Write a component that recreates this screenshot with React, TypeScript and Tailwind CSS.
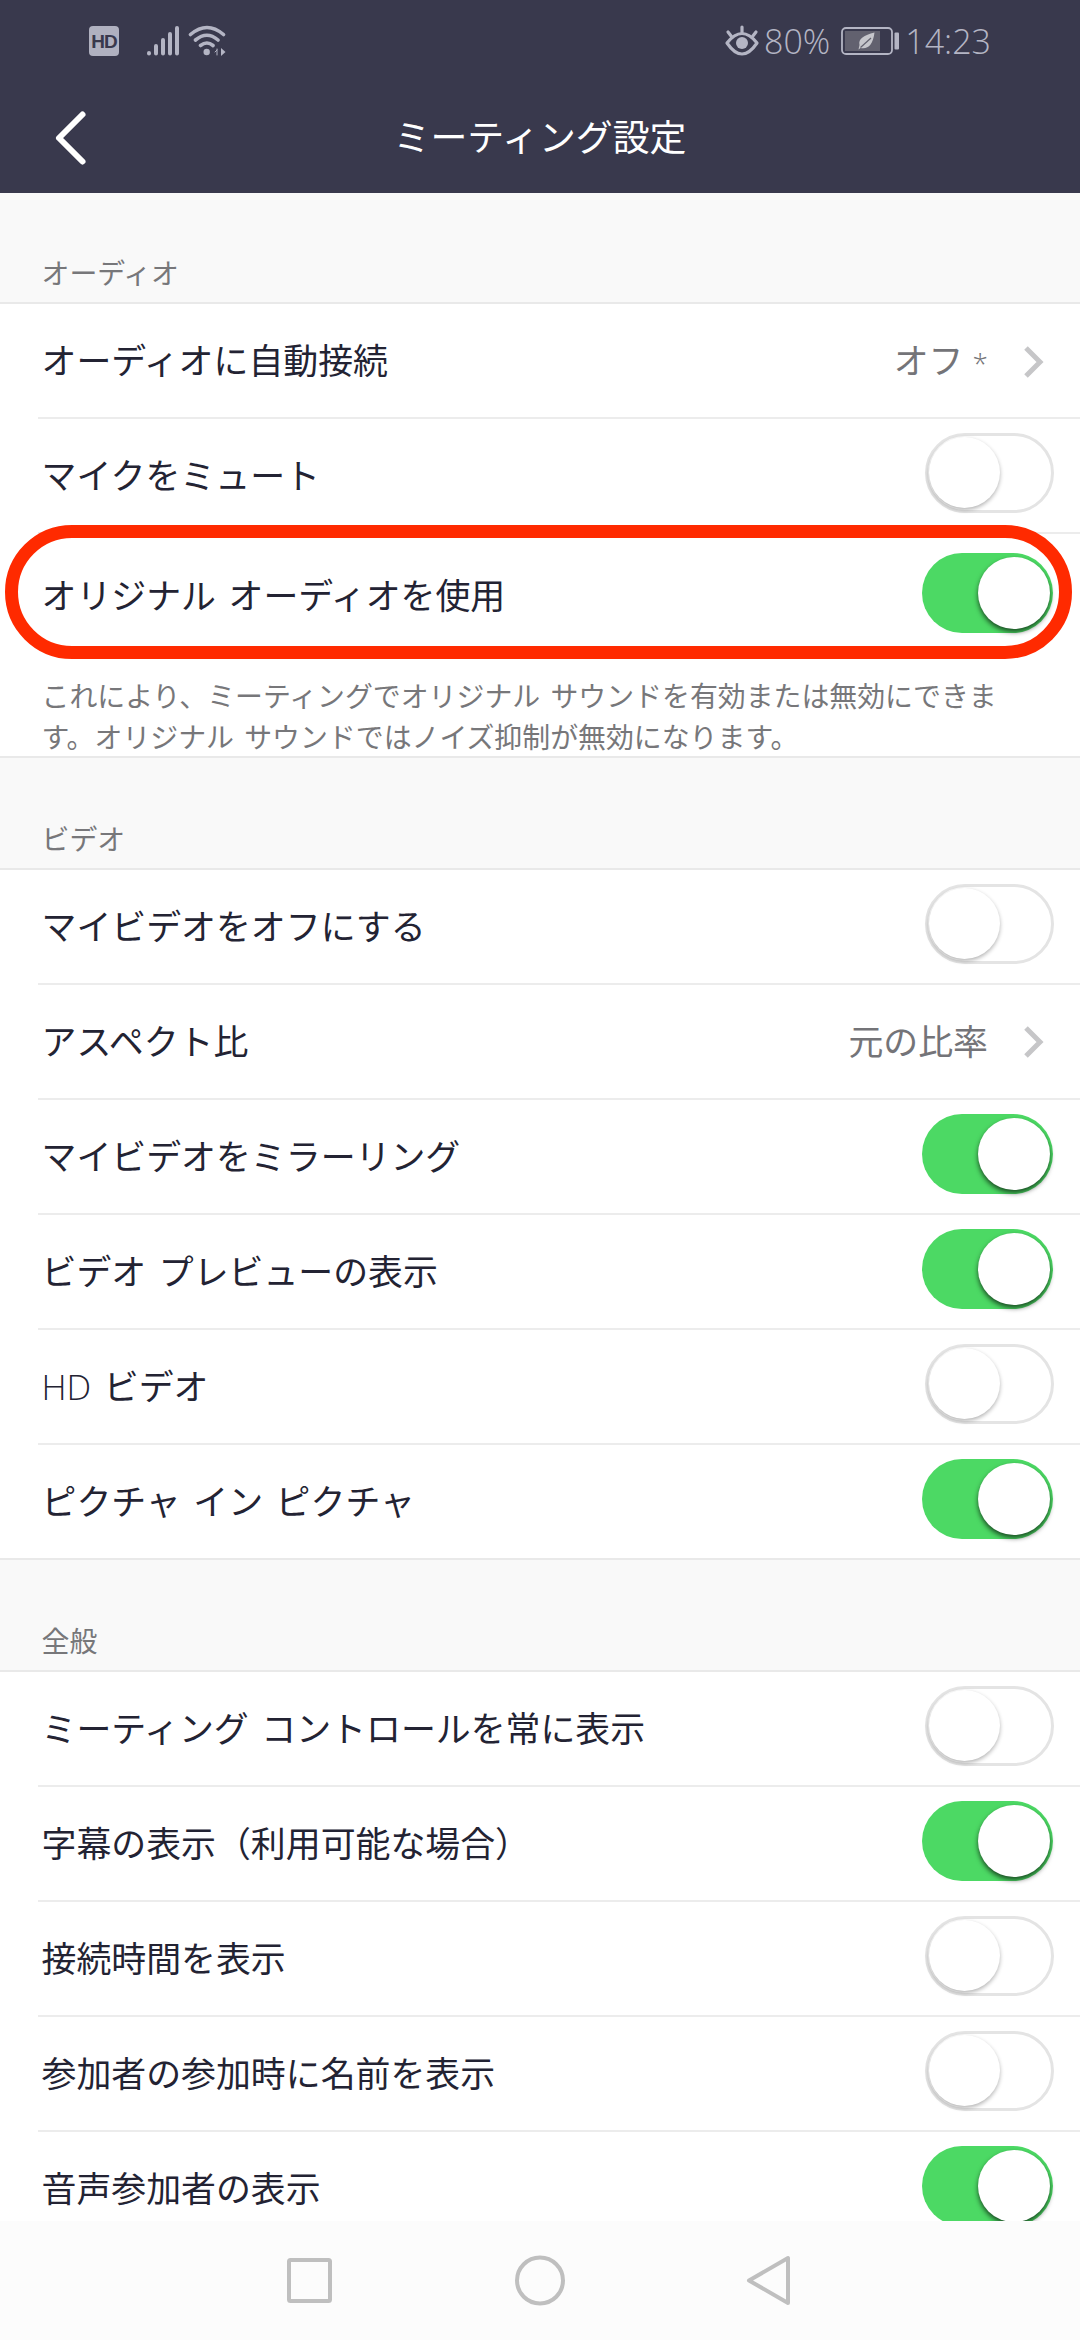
import clsx from "clsx";

type Row = {
  label: string;
  on?: boolean;
  value?: string;
  highlighted?: boolean;
};

type Section = {
  title: string;
  rows: Row[];
  note?: string;
};

const sections: Section[] = [
  {
    title: "オーディオ",
    rows: [
      { label: "オーディオに自動接続", value: "オフ *" },
      { label: "マイクをミュート", on: false },
      { label: "オリジナル オーディオを使用", on: true, highlighted: true },
    ],
    note: "これにより、ミーティングでオリジナル サウンドを有効または無効にできます。オリジナル サウンドではノイズ抑制が無効になります。",
  },
  {
    title: "ビデオ",
    rows: [
      { label: "マイビデオをオフにする", on: false },
      { label: "アスペクト比", value: "元の比率" },
      { label: "マイビデオをミラーリング", on: true },
      { label: "ビデオ プレビューの表示", on: true },
      { label: "HD ビデオ", on: false },
      { label: "ピクチャ イン ピクチャ", on: true },
    ],
  },
  {
    title: "全般",
    rows: [
      { label: "ミーティング コントロールを常に表示", on: false },
      { label: "字幕の表示（利用可能な場合）", on: true },
      { label: "接続時間を表示", on: false },
      { label: "参加者の参加時に名前を表示", on: false },
      { label: "音声参加者の表示", on: true },
    ],
  },
];

function StatusBar() {
  return (
    <div className="flex h-[82px] items-center justify-between pl-[89px] pr-[89px] text-[#b4b5c4]">
      <div className="flex items-center">
        <div className="flex h-[30px] w-[30px] items-center justify-center rounded-[4px] bg-[#b0b1c0] font-['Liberation_Sans'] text-[19px] font-bold leading-none tracking-[-1px] text-[#39394d]">
          HD
        </div>
        <svg className="ml-[27px] h-[32px] w-[34px]" viewBox="0 0 34 32" stroke="currentColor" strokeWidth="4" strokeLinecap="round">
          <path d="M3 28v0.5M10 21v7.5M17 15v13.5M24 9v19.5M31 3v25.5" />
        </svg>
        <svg className="ml-[8px] h-[32px] w-[38px]" viewBox="0 0 38 32" fill="none" stroke="currentColor" strokeWidth="3.6" strokeLinecap="round">
          <path d="M2.5 9.5Q19 -4.5 35.5 9.5M7.5 15Q19 5.5 30 15M12.5 20.5Q19 15.5 25 20.5" />
          <circle cx="18.7" cy="27" r="3.2" fill="currentColor" stroke="none" />
          <path d="M33 23v8l4.5-4z" fill="currentColor" stroke="none" />
          <path d="M29 24v6M29 25l-2 2" strokeWidth="1" />
        </svg>
      </div>
      <div className="flex items-center font-['Open_Sans'] text-[34px] font-light leading-none">
        <svg className="h-[32px] w-[36px]" viewBox="0 0 36 32" fill="none" stroke="currentColor" strokeWidth="3.2" strokeLinecap="round">
          <path d="M3 18Q18 -1 33 18Q18 40 3 18Z" strokeLinejoin="round" />
          <circle cx="18" cy="18" r="6" fill="currentColor" stroke="none" />
          <path d="M18 2v5M4 7l3.5 4.5M32 7l-3.5 4.5" />
        </svg>
        <span className="ml-[4px]">80%</span>
        <svg className="ml-[11px] h-[28px] w-[60px]" viewBox="0 0 60 28">
          <rect x="1" y="1" width="50" height="26" rx="4" fill="none" stroke="currentColor" strokeWidth="1.8" />
          <rect x="4" y="4" width="35" height="20" fill="#62616f" />
          <path d="M33.5 5.5C23 8 17 12 18.5 18l-1 4.5 2-1.5C27 22.5 32 18 33.5 5.5Z" fill="#c6c6cc" />
          <path d="M19.5 20.5 30 11" stroke="#62616f" strokeWidth="1.2" />
          <rect x="53.5" y="5.5" width="4.5" height="17" rx="1" fill="currentColor" />
        </svg>
        <span className="ml-[4px]">14:23</span>
      </div>
    </div>
  );
}

function TitleBar() {
  return (
    <div className="grid h-[111px] grid-cols-[140px_1fr_140px] items-center">
      <svg className="ml-[54px] h-[56px] w-[36px]" viewBox="0 0 36 56" fill="none" stroke="white" strokeWidth="6" strokeLinecap="round" strokeLinejoin="round">
        <path d="M28.5 4.5 5 28l23.5 23.5" />
      </svg>
      <h1 className="text-center text-[36.9px] leading-none text-white">ミーティング設定</h1>
    </div>
  );
}

// Latin runs are set lighter than the Japanese around them
function MixedText({ text }: { text: string }) {
  return text.split(/(HD|\*)/).map((part, i) => {
    if (part === "HD") return <span key={i} className="font-light">{part}</span>;
    if (part === "*") return <span key={i} className="text-[28px] font-light">{part}</span>;
    return part;
  });
}

function Toggle({ on }: { on: boolean }) {
  return (
    <div
      className={clsx(
        "flex h-[80px] shrink-0 rounded-full",
        on
          ? "mr-[27.5px] w-[131px] justify-end bg-[#4cd964] pr-[3px] pt-[4px]"
          : "mr-[26px] w-[129px] border-[3px] border-[#e4e4e4] pl-[1px] pt-[1px]",
      )}
    >
      <div
        className={clsx(
          "rounded-full bg-white",
          on
            ? "h-[72px] w-[72px] shadow-[0_3px_5px_rgba(0,0,0,0.65)]"
            : "h-[71px] w-[71px] shadow-[0_2px_4px_rgba(0,0,0,0.3)]",
        )}
      />
    </div>
  );
}

function SettingRow({ row, last }: { row: Row; last: boolean }) {
  return (
    <div
      className={clsx(
        "relative flex pl-[38px]",
        row.highlighted ? "h-[121px]" : last ? "h-[113px]" : "h-[115px]",
      )}
    >
      <div
        className={clsx(
          "flex flex-1 items-start",
          !last && "border-b-[2px] border-[#ececec]",
        )}
      >
        <span
          className={clsx(
            "ml-[3.5px] flex-1 text-[34.9px] leading-[50px] [word-spacing:3.5px] text-[#232333]",
            row.highlighted ? "mt-[37px]" : "mt-[32px]",
          )}
        >
          <MixedText text={row.label} />
        </span>
        {row.value ? (
          <div className="mr-[36px] mt-[32px] flex items-center text-[34.9px] leading-[50px] text-[#747478]">
            <span className="whitespace-pre">
              <MixedText text={row.value} />
            </span>
            <svg className="ml-[36px] h-[32px] w-[20px]" viewBox="0 0 20 32" fill="none" stroke="#c6c6c8" strokeWidth="5">
              <path d="M2 2l14 14L2 30" />
            </svg>
          </div>
        ) : (
          <div className={row.highlighted ? "mt-[18.5px]" : "mt-[14px]"}>
            <Toggle on={!!row.on} />
          </div>
        )}
      </div>
      {row.highlighted && (
        <div className="absolute left-[4.5px] top-[-9px] h-[133.5px] w-[1067px] rounded-full border-[13.5px] border-[#ff2a00]" />
      )}
    </div>
  );
}

export default function App() {
  return (
    <div className="flex h-[2340px] w-[1080px] flex-col overflow-hidden bg-white font-['Open_Sans','Noto_Sans_CJK_JP',sans-serif]">
      <header className="h-[193px] shrink-0 bg-[#39394d]">
        <StatusBar />
        <TitleBar />
      </header>
      <main className="min-h-0 flex-1 overflow-hidden">
        {sections.map((section, i) => (
          <section key={section.title}>
            <div
              className={clsx(
                "flex items-end border-b-[2px] border-[#e9e9e9] bg-[#f9f9f9] pb-[8.5px] pl-[41.5px] text-[27.9px]/[41px] text-[#77777a]",
                i === 0 ? "h-[111.3px]" : "h-[114.2px] border-t-[2px]",
              )}
            >
              {section.title}
            </div>
            {section.rows.map((row, j) => (
              <SettingRow
                key={row.label}
                row={row}
                last={j === section.rows.length - 1}
              />
            ))}
            {section.note && (
              <p className="h-[100.7px] pl-[41.5px] pr-[70px] pt-[20.5px] text-[27.9px] leading-[41px] [word-spacing:3px] text-[#77777a]">
                {section.note}
              </p>
            )}
          </section>
        ))}
      </main>
      <nav className="flex h-[119px] shrink-0 items-center bg-[#fcfcfc]">
        <svg className="mx-auto h-[56px] w-[520px]" viewBox="0 0 520 56" fill="none" stroke="#bfbfbf" strokeWidth="4" strokeLinejoin="round">
          <rect x="9" y="7" width="41" height="41" rx="1.5" />
          <circle cx="260" cy="27.5" r="23" />
          <path d="M508 5v45L469 27.5Z" />
        </svg>
      </nav>
    </div>
  );
}
